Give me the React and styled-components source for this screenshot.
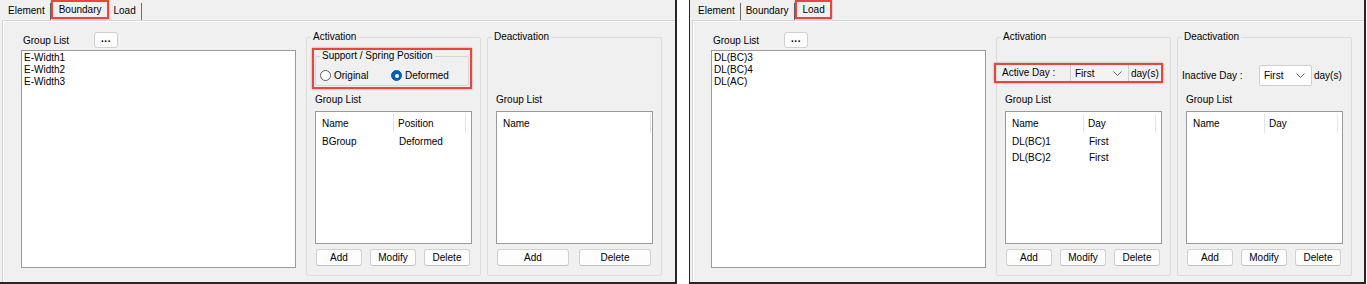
import React from "react";
import styled, { createGlobalStyle, css } from "styled-components";

const GlobalStyle = createGlobalStyle`
  body {
    margin: 0;
    background: #fff;
    font-family: "Liberation Sans", Arial, sans-serif;
    font-size: 10px;
    color: #000;
  }
`;

const RED = "#e8463c";

const marked = css`
  border: 2px solid ${RED};
  box-shadow: 0 0 2px rgba(0, 0, 0, 0.35);
`;

const Screen = styled.div`
  display: flex;
  gap: 12px;
  width: 1367px;
  height: 284px;
`;

const Dialog = styled.div`
  box-sizing: border-box;
  width: 677px;
  height: 284px;
  background: #f0f0f0;
  border-right: 2px solid #262626;
  border-bottom: 2px solid #262626;
  border-left: ${(p) => (p.$framed ? "1px solid #262626" : "0")};
  display: flex;
  flex-direction: column;
`;

const TabStrip = styled.div`
  box-sizing: border-box;
  height: 20px;
  display: flex;
  align-items: flex-end;
  padding-left: 3px;
`;

const Tab = styled.div`
  box-sizing: border-box;
  height: 17px;
  line-height: 16px;
  padding: 0 5px;
  border-right: 1px solid #6b6b6b;
  ${(p) =>
    p.$marked &&
    css`
      ${marked};
      height: 19px;
      line-height: 16px;
      padding: 0 5px 0 6px;
      margin-bottom: 1px;
    `}
`;

const Page = styled.div`
  flex: 1;
  margin-left: 2px;
  border-top: 1px solid #d6d6d6;
  border-left: 1px solid #d6d6d6;
  box-shadow: inset 1px 1px 0 #fff;
  display: flex;
  align-items: flex-start;
  padding: 10px 0 0 18px;
`;

const LeftColumn = styled.div`
  width: 275px;
  display: flex;
  flex-direction: column;
`;

const HeaderRow = styled.div`
  height: 19px;
  display: flex;
  align-items: flex-end;
`;

const Label = styled.div`
  line-height: 12px;
  white-space: nowrap;
  margin: 0 0 ${(p) => p.$mb || 0}px ${(p) => p.$ml || 0}px;
  width: ${(p) => (p.$w ? p.$w + "px" : "auto")};
  flex-shrink: 0;
`;

const DotsButton = styled.div`
  box-sizing: border-box;
  width: 24px;
  height: 16px;
  margin: 0 0 2px 24px;
  background: #fdfdfd;
  border: 1px solid #d0d0d0;
  border-radius: 3px;
  text-align: center;
  line-height: 11px;
  font-weight: bold;
  letter-spacing: 0.5px;
`;

const ListBox = styled.div`
  box-sizing: border-box;
  height: 218px;
  background: #fff;
  border: 1px solid #9a9a9a;
  padding: 1px 2px;
`;

const ListItem = styled.div`
  line-height: 12px;
`;

const Frame = styled.fieldset`
  box-sizing: border-box;
  width: 175px;
  height: 245px;
  margin: 0 0 0 ${(p) => p.$gap}px;
  padding: 0 8px 0;
  border: 1px solid #dcdcdc;
  border-radius: 2px;
  min-inline-size: 0;
  display: flex;
  flex-direction: column;
`;

const Legend = styled.legend`
  padding: 0 2px;
  margin-left: -4px;
  line-height: 12px;
`;

const TopArea = styled.div`
  height: 51px;
  display: flex;
  flex-direction: column;
  align-items: flex-start;
`;

const SupportBox = styled.div`
  ${marked};
  box-sizing: border-box;
  width: 160px;
  height: 41px;
  margin: 5px 0 0 -3px;
  display: flex;
`;

const InnerFrame = styled.fieldset`
  box-sizing: border-box;
  flex: 1;
  height: 36px;
  margin: 0 1px;
  padding: 0 4px;
  border: 1px solid #d6d6d6;
  border-radius: 2px;
  min-inline-size: 0;
`;

const InnerLegend = styled.legend`
  padding: 0 2px;
  line-height: 12px;
`;

const RadioRow = styled.div`
  display: flex;
  margin-top: 7px;
  height: 13px;
  align-items: center;
`;

const RadioItem = styled.label`
  display: flex;
  align-items: center;
  gap: 3px;
  width: ${(p) => p.$w}px;
`;

const RadioDot = styled.span`
  box-sizing: border-box;
  width: 11px;
  height: 11px;
  border-radius: 50%;
  border: 1px solid #5c5c5c;
  background: #fff;
  display: flex;
  align-items: center;
  justify-content: center;
  ${(p) =>
    p.$checked &&
    css`
      border-color: #005fb8;
      background: #005fb8;
      &::after {
        content: "";
        width: 4px;
        height: 4px;
        border-radius: 50%;
        background: #fff;
      }
    `}
`;

const DayRow = styled.div`
  box-sizing: border-box;
  display: flex;
  align-items: center;
  height: ${(p) => p.$h}px;
  margin: ${(p) => p.$mt}px 0 0 ${(p) => p.$ml}px;
  padding-left: ${(p) => p.$pl}px;
  ${(p) => p.$marked && marked};
  ${(p) => p.$marked && css`width: 169px;`}
`;

const Combo = styled.div`
  box-sizing: border-box;
  display: flex;
  align-items: center;
  justify-content: space-between;
  width: ${(p) => p.$w}px;
  height: ${(p) => p.$h}px;
  padding: 0 6px 0 4px;
  background: ${(p) => (p.$flat ? "#f3f3f3" : "#fff")};
  border: 1px solid #cfcfcf;
  ${(p) =>
    p.$flat
      ? css`
          border-top: 0;
          border-bottom: 0;
        `
      : css`
          border-radius: 2px;
        `}
  margin-right: 2px;
`;

const ListView = styled.div`
  box-sizing: border-box;
  height: 133px;
  margin-top: 5px;
  background: #fff;
  border: 1px solid #9a9a9a;
`;

const ListHead = styled.div`
  display: flex;
  height: 22px;
  align-items: center;
`;

const HeadCell = styled.div`
  box-sizing: border-box;
  width: ${(p) => p.$w}px;
  height: 19px;
  line-height: 19px;
  padding-left: ${(p) => p.$pl}px;
  border-right: 1px solid #e3e3e3;
`;

const ListRow = styled.div`
  display: flex;
  height: 16px;
  line-height: 16px;
`;

const Cell = styled.div`
  box-sizing: border-box;
  width: ${(p) => p.$w}px;
  padding-left: ${(p) => p.$pl}px;
`;

const ButtonRow = styled.div`
  display: flex;
  justify-content: space-between;
  margin-top: 5px;
  padding: 0 2px 0 1px;
`;

const Button = styled.div`
  box-sizing: border-box;
  width: ${(p) => p.$w}px;
  height: 17px;
  line-height: 15px;
  text-align: center;
  background: #fdfdfd;
  border: 1px solid #d0d0d0;
  border-bottom-color: #c2c2c2;
  border-radius: 3px;
`;

const Chevron = () => (
  <svg width="9" height="5" viewBox="0 0 9 5">
    <path d="M0.5 0.5 L4.5 4.5 L8.5 0.5" fill="none" stroke="#666" strokeWidth="1" />
  </svg>
);

const Columns = ({ cols, rows }) => (
  <ListView>
    <ListHead>
      {cols.map((c, i) => (
        <HeadCell key={c.title} $w={c.w} $pl={i === 0 ? 6 : 4}>
          {c.title}
        </HeadCell>
      ))}
    </ListHead>
    {rows.map((r, ri) => (
      <ListRow key={ri}>
        {r.map((v, i) => (
          <Cell key={i} $w={cols[i].w} $pl={i === 0 ? 6 : 5}>
            {v}
          </Cell>
        ))}
      </ListRow>
    ))}
  </ListView>
);

const Buttons = ({ names, w }) => (
  <ButtonRow>
    {names.map((n) => (
      <Button key={n} $w={w}>
        {n}
      </Button>
    ))}
  </ButtonRow>
);

const Tabs = ({ active }) => (
  <TabStrip>
    {["Element", "Boundary", "Load"].map((t) => (
      <Tab key={t} $marked={t === active}>
        {t}
      </Tab>
    ))}
  </TabStrip>
);

const GroupColumn = ({ items }) => (
  <LeftColumn>
    <HeaderRow>
      <Label $ml={2} $mb={3} $w={47}>
        Group List
      </Label>
      <DotsButton>...</DotsButton>
    </HeaderRow>
    <ListBox>
      {items.map((it) => (
        <ListItem key={it}>{it}</ListItem>
      ))}
    </ListBox>
  </LeftColumn>
);

const BoundaryDialog = () => (
  <Dialog>
    <Tabs active="Boundary" />
    <Page>
      <GroupColumn items={["E-Width1", "E-Width2", "E-Width3"]} />
      <Frame $gap={10}>
        <Legend>Activation</Legend>
        <TopArea>
          <SupportBox>
            <InnerFrame>
              <InnerLegend>Support / Spring Position</InnerLegend>
              <RadioRow>
                <RadioItem $w={71}>
                  <RadioDot />
                  Original
                </RadioItem>
                <RadioItem $w={70}>
                  <RadioDot $checked />
                  Deformed
                </RadioItem>
              </RadioRow>
            </InnerFrame>
          </SupportBox>
        </TopArea>
        <Label>Group List</Label>
        <Columns
          cols={[
            { title: "Name", w: 78 },
            { title: "Position", w: 72 },
          ]}
          rows={[["BGroup", "Deformed"]]}
        />
        <Buttons names={["Add", "Modify", "Delete"]} w={46} />
      </Frame>
      <Frame $gap={6}>
        <Legend>Deactivation</Legend>
        <TopArea />
        <Label>Group List</Label>
        <Columns cols={[{ title: "Name", w: 154 }]} rows={[]} />
        <Buttons names={["Add", "Delete"]} w={72} />
      </Frame>
    </Page>
  </Dialog>
);

const LoadDialog = () => (
  <Dialog $framed>
    <Tabs active="Load" />
    <Page>
      <GroupColumn items={["DL(BC)3", "DL(BC)4", "DL(AC)"]} />
      <Frame $gap={10}>
        <Legend>Activation</Legend>
        <TopArea>
          <DayRow $marked $h={20} $mt={20} $ml={-11} $pl={6}>
            <Label $w={68}>Active Day :</Label>
            <Combo $flat $w={59} $h={16}>
              First
              <Chevron />
            </Combo>
            day(s)
          </DayRow>
        </TopArea>
        <Label>Group List</Label>
        <Columns
          cols={[
            { title: "Name", w: 78 },
            { title: "Day", w: 72 },
          ]}
          rows={[
            ["DL(BC)1", "First"],
            ["DL(BC)2", "First"],
          ]}
        />
        <Buttons names={["Add", "Modify", "Delete"]} w={46} />
      </Frame>
      <Frame $gap={6}>
        <Legend>Deactivation</Legend>
        <TopArea>
          <DayRow $h={21} $mt={22} $ml={-4} $pl={0}>
            <Label $w={77}>Inactive Day :</Label>
            <Combo $w={53} $h={21}>
              First
              <Chevron />
            </Combo>
            day(s)
          </DayRow>
        </TopArea>
        <Label>Group List</Label>
        <Columns
          cols={[
            { title: "Name", w: 78 },
            { title: "Day", w: 73 },
          ]}
          rows={[]}
        />
        <Buttons names={["Add", "Modify", "Delete"]} w={46} />
      </Frame>
    </Page>
  </Dialog>
);

export default function App() {
  return (
    <>
      <GlobalStyle />
      <Screen>
        <BoundaryDialog />
        <LoadDialog />
      </Screen>
    </>
  );
}
